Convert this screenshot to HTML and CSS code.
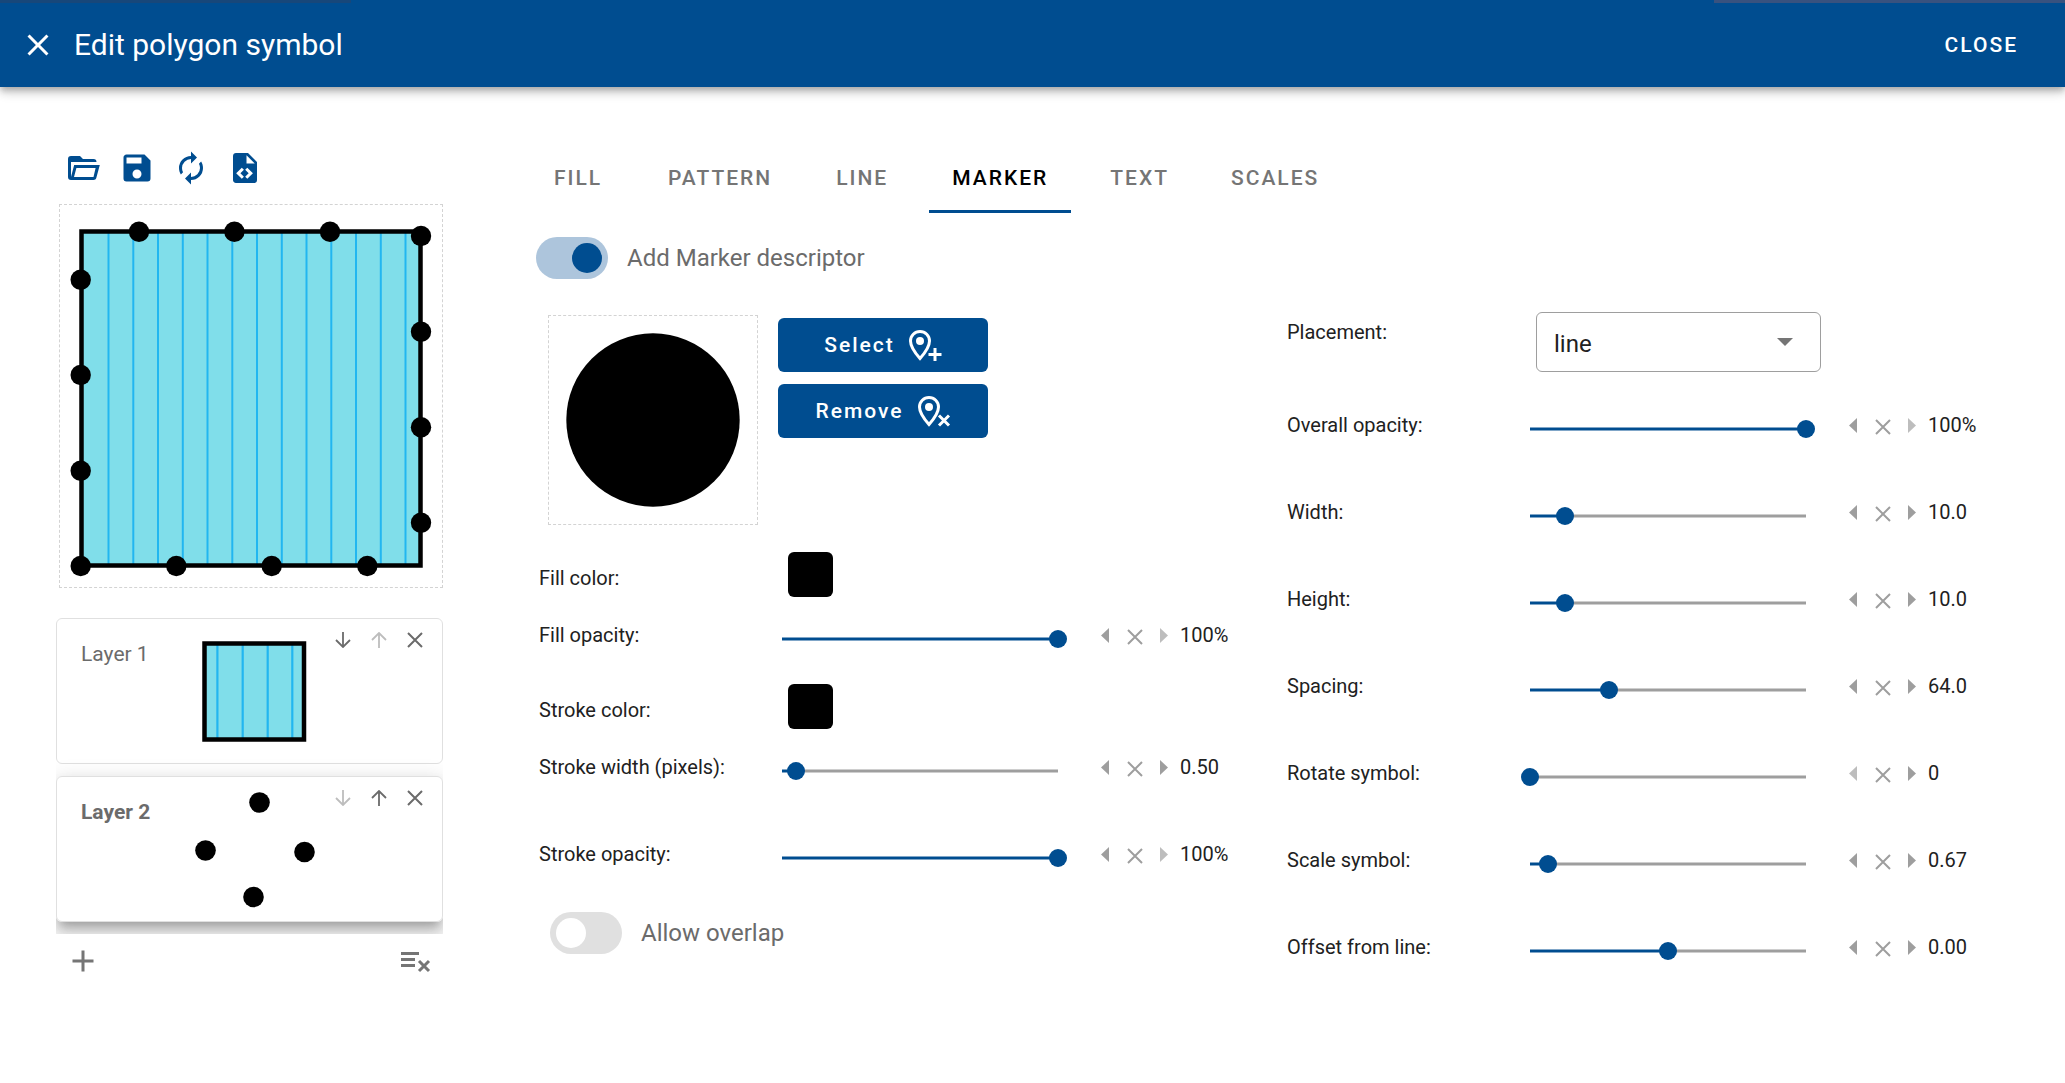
FILE: index.html
```html
<!DOCTYPE html>
<html lang="en">
<head>
    <meta charset="UTF-8">
    <meta name="viewport" content="width=device-width, initial-scale=1.0">
    <title>Edit polygon symbol</title>
    <link rel="stylesheet" href="styles.css">
</head>
<body>

<!-- Shared icons -->
<svg class="sprite" aria-hidden="true">
    <symbol id="i-close" viewBox="0 0 24 24"><path d="M19,6.41L17.59,5L12,10.59L6.41,5L5,6.41L10.59,12L5,17.59L6.41,19L12,13.41L17.59,19L19,17.59L13.41,12L19,6.41Z"/></symbol>
    <symbol id="i-x" viewBox="0 0 16 16"><path d="M1 1L15 15M15 1L1 15" fill="none" stroke="currentColor" stroke-width="2"/></symbol>
    <symbol id="i-down" viewBox="0 0 16 16"><path d="M8 0V14M1 8L8 15L15 8" fill="none" stroke="currentColor" stroke-width="1.8"/></symbol>
    <symbol id="i-up" viewBox="0 0 16 16"><path d="M8 16V2M1 8L8 1L15 8" fill="none" stroke="currentColor" stroke-width="1.8"/></symbol>
    <symbol id="i-prev" viewBox="0 0 8 15"><path d="M8 0V15L0 7.5Z"/></symbol>
    <symbol id="i-next" viewBox="0 0 8 15"><path d="M0 0V15L8 7.5Z"/></symbol>
</svg>

<header class="topbar">
    <button class="icon-btn" aria-label="Close dialog"><svg><use href="#i-close"/></svg></button>
    <h1>Edit polygon symbol</h1>
    <button class="close-btn">CLOSE</button>
</header>

<main class="editor">
    <!-- Preview and layers -->
    <aside class="sidebar">
        <div class="toolbar">
            <button class="icon-btn" aria-label="Open"><svg viewBox="0 0 24 24"><path d="M6.1,10L4,18V8H21A2,2 0 0,0 19,6H12L10,4H4A2,2 0 0,0 2,6V18A2,2 0 0,0 4,20H19C19.9,20 20.7,19.4 20.9,18.5L23.2,10H6.1M19,18H6L7.6,12H20.4L19,18Z"/></svg></button>
            <button class="icon-btn" aria-label="Save"><svg viewBox="0 0 24 24"><path d="M15,9H5V5H15M12,19A3,3 0 0,1 9,16A3,3 0 0,1 12,13A3,3 0 0,1 15,16A3,3 0 0,1 12,19M17,3H5C3.89,3 3,3.9 3,5V19A2,2 0 0,0 5,21H19A2,2 0 0,0 21,19V7L17,3Z"/></svg></button>
            <button class="icon-btn" aria-label="Replace"><svg viewBox="0 0 24 24"><path d="M12,6V9L16,5L12,1V4A8,8 0 0,0 4,12C4,13.57 4.46,15.03 5.24,16.26L6.7,14.8C6.25,13.97 6,13 6,12A6,6 0 0,1 12,6M18.76,7.74L17.3,9.2C17.74,10.04 18,11 18,12A6,6 0 0,1 12,18V15L8,19L12,23V20A8,8 0 0,0 20,12C20,10.43 19.54,8.97 18.76,7.74Z"/></svg></button>
            <button class="icon-btn" aria-label="Show code"><svg viewBox="0 0 24 24"><path d="M13,9H18.5L13,3.5V9M6,2H14L20,8V20A2,2 0 0,1 18,22H6C4.89,22 4,21.1 4,20V4C4,2.89 4.89,2 6,2M6.12,15.5L9.86,19.24L11.28,17.83L8.95,15.5L11.28,13.17L9.86,11.76L6.12,15.5M17.28,15.5L13.54,11.76L12.12,13.17L14.45,15.5L12.12,17.83L13.54,19.24L17.28,15.5Z"/></svg></button>
        </div>

        <div class="preview">
            <svg viewBox="0 0 384 384">
                <rect x="22.5" y="27.5" width="339" height="334" fill="#80deea"/>
                <path d="M49.5 28V361M74.3 28V361M99 28V361M123.8 28V361M148.5 28V361M173.3 28V361M198 28V361M222.8 28V361M247.5 28V361M272.3 28V361M297 28V361M321.8 28V361M346.5 28V361" stroke="#22b6f0" stroke-width="2"/>
                <rect x="22.5" y="27.5" width="339" height="334" fill="none" stroke="#000" stroke-width="4.5"/>
                <g fill="#000">
                    <circle cx="80" cy="27.7" r="10.2"/><circle cx="175.4" cy="27.7" r="10.2"/><circle cx="271" cy="27.7" r="10.2"/>
                    <circle cx="362" cy="32" r="10.2"/><circle cx="362" cy="127.7" r="10.2"/><circle cx="362" cy="223.3" r="10.2"/><circle cx="362" cy="318.7" r="10.2"/>
                    <circle cx="308.3" cy="362" r="10.2"/><circle cx="212.7" cy="362" r="10.2"/><circle cx="117.3" cy="362" r="10.2"/>
                    <circle cx="21.7" cy="362" r="10.2"/><circle cx="21.7" cy="266.7" r="10.2"/><circle cx="21.7" cy="171" r="10.2"/><circle cx="21.7" cy="75.7" r="10.2"/>
                </g>
            </svg>
        </div>

        <div class="layers">
            <div class="layer">
                <span class="layer-name">Layer 1</span>
                <svg class="thumb" viewBox="0 0 120 120">
                    <rect x="9.5" y="12.5" width="99.5" height="96" fill="#80deea"/>
                    <path d="M22.4 12V108M47.7 12V108M72.7 12V108M97.3 12V108" stroke="#22b6f0" stroke-width="2.2"/>
                    <rect x="9.5" y="12.5" width="99.5" height="96" fill="none" stroke="#000" stroke-width="4.5"/>
                </svg>
                <div class="layer-actions">
                    <button aria-label="Move down"><svg><use href="#i-down"/></svg></button>
                    <button aria-label="Move up" disabled><svg><use href="#i-up"/></svg></button>
                    <button aria-label="Remove layer"><svg><use href="#i-x"/></svg></button>
                </div>
            </div>
            <div class="layer active">
                <span class="layer-name">Layer 2</span>
                <svg class="thumb" viewBox="0 0 120 120">
                    <circle cx="64.5" cy="13.5" r="10.3"/><circle cx="10.5" cy="61.5" r="10.3"/><circle cx="109.5" cy="63" r="10.3"/><circle cx="58.5" cy="108" r="10.3"/>
                </svg>
                <div class="layer-actions">
                    <button aria-label="Move down" disabled><svg><use href="#i-down"/></svg></button>
                    <button aria-label="Move up"><svg><use href="#i-up"/></svg></button>
                    <button aria-label="Remove layer"><svg><use href="#i-x"/></svg></button>
                </div>
            </div>
        </div>

        <div class="layers-footer">
            <button class="icon-btn" aria-label="Add layer"><svg viewBox="0 0 36 36"><path d="M18 7.5V28.5M7.5 18H28.5" stroke="currentColor" stroke-width="3"/></svg></button>
            <button class="icon-btn" aria-label="Remove all layers"><svg viewBox="0 0 36 36"><path d="M4 10.5H22M4 16.5H18M4 22.5H18M22 18L32 28M32 18L22 28" stroke="currentColor" stroke-width="3"/></svg></button>
        </div>
    </aside>

    <!-- Symbol descriptor -->
    <section class="content">
        <nav class="tabs">
            <button class="tab">FILL</button>
            <button class="tab">PATTERN</button>
            <button class="tab">LINE</button>
            <button class="tab active">MARKER</button>
            <button class="tab">TEXT</button>
            <button class="tab">SCALES</button>
        </nav>

        <label class="switch add-marker">
            <input type="checkbox" checked>
            Add Marker descriptor
        </label>

        <div class="columns">
            <div class="column">
                <div class="marker">
                    <div class="marker-preview"><svg viewBox="0 0 208 208"><circle cx="104" cy="104" r="86.7"/></svg></div>
                    <div class="marker-buttons">
                        <button class="btn">Select
                            <svg viewBox="0 0 33 31"><path d="M11 1.5A9.5 9.5 0 0 0 1.5 11C1.5 17 7 24 11 28.5C15 24 20.5 17 20.5 11A9.5 9.5 0 0 0 11 1.5Z" fill="none" stroke="currentColor" stroke-width="3"/><circle cx="11" cy="11" r="4"/><path d="M26 18V31M19.5 24.5H32.5" stroke="currentColor" stroke-width="3"/></svg>
                        </button>
                        <button class="btn">Remove
                            <svg viewBox="0 0 33 31"><path d="M11 1.5A9.5 9.5 0 0 0 1.5 11C1.5 17 7 24 11 28.5C15 24 20.5 17 20.5 11A9.5 9.5 0 0 0 11 1.5Z" fill="none" stroke="currentColor" stroke-width="3"/><circle cx="11" cy="11" r="4"/><path d="M21 19.5L31 29.5M31 19.5L21 29.5" stroke="currentColor" stroke-width="3"/></svg>
                        </button>
                    </div>
                </div>

                <div class="row color-row">
                    <label for="fillColor">Fill color:</label>
                    <input type="color" id="fillColor" value="#000000">
                </div>
                <div class="row slider-row">
                    <label for="fillOpacity">Fill opacity:</label>
                    <div class="slider" style="--fill: 100%"><input type="range" id="fillOpacity" min="0" max="1" step="any" value="1"></div>
                    <div class="stepper">
                        <button aria-label="Decrease"><svg class="arrow"><use href="#i-prev"/></svg></button>
                        <button aria-label="Clear"><svg class="clear"><use href="#i-x"/></svg></button>
                        <button aria-label="Increase" disabled><svg class="arrow"><use href="#i-next"/></svg></button>
                    </div>
                    <output>100%</output>
                </div>
                <div class="row color-row">
                    <label for="strokeColor">Stroke color:</label>
                    <input type="color" id="strokeColor" value="#000000">
                </div>
                <div class="row slider-row">
                    <label for="strokeWidth">Stroke width (pixels):</label>
                    <div class="slider" style="--fill: 5%"><input type="range" id="strokeWidth" min="0" max="10" step="any" value="0.5"></div>
                    <div class="stepper">
                        <button aria-label="Decrease"><svg class="arrow"><use href="#i-prev"/></svg></button>
                        <button aria-label="Clear"><svg class="clear"><use href="#i-x"/></svg></button>
                        <button aria-label="Increase"><svg class="arrow"><use href="#i-next"/></svg></button>
                    </div>
                    <output>0.50</output>
                </div>
                <div class="row slider-row">
                    <label for="strokeOpacity">Stroke opacity:</label>
                    <div class="slider" style="--fill: 100%"><input type="range" id="strokeOpacity" min="0" max="1" step="any" value="1"></div>
                    <div class="stepper">
                        <button aria-label="Decrease"><svg class="arrow"><use href="#i-prev"/></svg></button>
                        <button aria-label="Clear"><svg class="clear"><use href="#i-x"/></svg></button>
                        <button aria-label="Increase" disabled><svg class="arrow"><use href="#i-next"/></svg></button>
                    </div>
                    <output>100%</output>
                </div>

                <label class="switch overlap">
                    <input type="checkbox">
                    Allow overlap
                </label>
            </div>

            <div class="column">
                <div class="row select-row">
                    <label for="placement">Placement:</label>
                    <div class="select">
                        <select id="placement">
                            <option>point</option>
                            <option selected>line</option>
                        </select>
                    </div>
                </div>
                <div class="row slider-row">
                    <label for="overallOpacity">Overall opacity:</label>
                    <div class="slider" style="--fill: 100%"><input type="range" id="overallOpacity" min="0" max="1" step="any" value="1"></div>
                    <div class="stepper">
                        <button aria-label="Decrease"><svg class="arrow"><use href="#i-prev"/></svg></button>
                        <button aria-label="Clear"><svg class="clear"><use href="#i-x"/></svg></button>
                        <button aria-label="Increase" disabled><svg class="arrow"><use href="#i-next"/></svg></button>
                    </div>
                    <output>100%</output>
                </div>
                <div class="row slider-row">
                    <label for="width">Width:</label>
                    <div class="slider" style="--fill: 12.7%"><input type="range" id="width" min="1" max="72" step="any" value="10"></div>
                    <div class="stepper">
                        <button aria-label="Decrease"><svg class="arrow"><use href="#i-prev"/></svg></button>
                        <button aria-label="Clear"><svg class="clear"><use href="#i-x"/></svg></button>
                        <button aria-label="Increase"><svg class="arrow"><use href="#i-next"/></svg></button>
                    </div>
                    <output>10.0</output>
                </div>
                <div class="row slider-row">
                    <label for="height">Height:</label>
                    <div class="slider" style="--fill: 12.7%"><input type="range" id="height" min="1" max="72" step="any" value="10"></div>
                    <div class="stepper">
                        <button aria-label="Decrease"><svg class="arrow"><use href="#i-prev"/></svg></button>
                        <button aria-label="Clear"><svg class="clear"><use href="#i-x"/></svg></button>
                        <button aria-label="Increase"><svg class="arrow"><use href="#i-next"/></svg></button>
                    </div>
                    <output>10.0</output>
                </div>
                <div class="row slider-row">
                    <label for="spacing">Spacing:</label>
                    <div class="slider" style="--fill: 28.8%"><input type="range" id="spacing" min="1" max="220" step="any" value="64"></div>
                    <div class="stepper">
                        <button aria-label="Decrease"><svg class="arrow"><use href="#i-prev"/></svg></button>
                        <button aria-label="Clear"><svg class="clear"><use href="#i-x"/></svg></button>
                        <button aria-label="Increase"><svg class="arrow"><use href="#i-next"/></svg></button>
                    </div>
                    <output>64.0</output>
                </div>
                <div class="row slider-row">
                    <label for="rotate">Rotate symbol:</label>
                    <div class="slider" style="--fill: 0%"><input type="range" id="rotate" min="0" max="360" step="any" value="0"></div>
                    <div class="stepper">
                        <button aria-label="Decrease" disabled><svg class="arrow"><use href="#i-prev"/></svg></button>
                        <button aria-label="Clear"><svg class="clear"><use href="#i-x"/></svg></button>
                        <button aria-label="Increase"><svg class="arrow"><use href="#i-next"/></svg></button>
                    </div>
                    <output>0</output>
                </div>
                <div class="row slider-row">
                    <label for="scale">Scale symbol:</label>
                    <div class="slider" style="--fill: 6.4%"><input type="range" id="scale" min="0.1" max="9" step="any" value="0.67"></div>
                    <div class="stepper">
                        <button aria-label="Decrease"><svg class="arrow"><use href="#i-prev"/></svg></button>
                        <button aria-label="Clear"><svg class="clear"><use href="#i-x"/></svg></button>
                        <button aria-label="Increase"><svg class="arrow"><use href="#i-next"/></svg></button>
                    </div>
                    <output>0.67</output>
                </div>
                <div class="row slider-row">
                    <label for="offset">Offset from line:</label>
                    <div class="slider" style="--fill: 50%"><input type="range" id="offset" min="-10" max="10" step="any" value="0"></div>
                    <div class="stepper">
                        <button aria-label="Decrease"><svg class="arrow"><use href="#i-prev"/></svg></button>
                        <button aria-label="Clear"><svg class="clear"><use href="#i-x"/></svg></button>
                        <button aria-label="Increase"><svg class="arrow"><use href="#i-next"/></svg></button>
                    </div>
                    <output>0.00</output>
                </div>
            </div>
        </div>
    </section>
</main>

</body>
</html>
```
FILE: styles.css
```css
* {
    box-sizing: border-box;
}

body {
    margin: 0;
    background-color: #fff;
    color: #212121;
    font-family: Roboto, sans-serif;
    font-size: 20px;
    line-height: 30px;
}

button {
    padding: 0;
    border: none;
    background: none;
    color: inherit;
    font: inherit;
    cursor: pointer;
}

svg {
    display: block;
    fill: currentColor;
}

.sprite {
    display: none;
}

/* Header */
.topbar {
    position: relative;
    display: flex;
    align-items: center;
    height: 87px;
    padding: 3px 23px 0 20px;
    background-color: #004d90;
    color: #fff;
    box-shadow: 0 3px 6px -1px rgba(0, 0, 0, 0.2), 0 6px 8px rgba(0, 0, 0, 0.14), 0 2px 15px rgba(0, 0, 0, 0.12);
}

.topbar::before,
.topbar::after {
    content: "";
    position: absolute;
    top: 0;
    height: 3px;
    width: 17%;
}

.topbar::before {
    left: 0;
    background-color: #17477a;
}

.topbar::after {
    right: 0;
    background-color: #38527f;
}

.topbar h1 {
    flex: 1;
    margin: 0 0 0 18px;
    font-size: 30px;
    font-weight: 400;
}

.icon-btn svg {
    width: 36px;
    height: 36px;
}

.close-btn {
    padding: 12px 24px;
    font-size: 21px;
    font-weight: 500;
    letter-spacing: 2px;
}

.editor {
    display: grid;
    grid-template-columns: 387px 1fr;
    gap: 86px;
    padding: 54px 30px 54px 56px;
}

/* Sidebar */
.sidebar {
    padding-top: 9px;
}

.toolbar {
    display: flex;
    gap: 18px;
    padding-left: 9px;
    color: #004d90;
}

.preview {
    margin: 18px 0 30px 3px;
}

.preview,
.marker-preview {
    outline: 1px dashed #d3d3d3;
    outline-offset: -1px;
}

.layers {
    display: flex;
    flex-direction: column;
    gap: 12px;
    padding-bottom: 12px;
    overflow: hidden;
}

.layer {
    display: grid;
    grid-template-columns: 114px 120px 1fr;
    align-items: start;
    height: 146px;
    padding-left: 24px;
    border: 1px solid #e0e0e0;
    border-radius: 6px;
    color: #6b6b6b;
}

.layer.active {
    box-shadow: 0 8px 8px -5px rgba(0, 0, 0, 0.2), 0 12px 15px 2px rgba(0, 0, 0, 0.14), 0 5px 21px 3px rgba(0, 0, 0, 0.12);
}

.layer-name {
    padding-top: 20px;
    font-size: 21px;
}

.active .layer-name {
    font-weight: 700;
}

.thumb {
    width: 120px;
    height: 120px;
    margin-top: 12px;
    color: #000;
}

.layer-actions {
    display: flex;
    justify-content: flex-end;
    padding: 3px 9px 0 0;
}

.layer-actions button {
    display: grid;
    place-items: center;
    width: 36px;
    height: 36px;
}

.layer-actions svg {
    width: 16px;
    height: 16px;
}

.layer-actions button:disabled {
    color: #bdbdbd;
}

.layers-footer {
    display: flex;
    justify-content: space-between;
    padding: 9px 10px 0 9px;
    color: #757575;
}

/* Tabs */
.tabs {
    display: flex;
    gap: 16px;
    margin-left: -2px;
}

.tab {
    min-width: 102px;
    height: 72px;
    padding: 5px 23px 0;
    border-bottom: 3px solid transparent;
    color: #757575;
    font-size: 21px;
    font-weight: 500;
    letter-spacing: 2px;
}

.tab.active {
    border-color: #004d90;
    color: #000;
}

/* Switches */
.switch {
    display: flex;
    align-items: center;
    gap: 19px;
    color: #6b6b6b;
    font-size: 24px;
}

.switch input {
    appearance: none;
    display: flex;
    width: 72px;
    height: 42px;
    margin: 0;
    padding: 6px;
    border-radius: 21px;
    background-color: #e0e0e0;
}

.switch input::before {
    content: "";
    width: 30px;
    height: 30px;
    border-radius: 50%;
    background-color: #fff;
}

.switch input:checked {
    justify-content: flex-end;
    background-color: #adc5dc;
}

.switch input:checked::before {
    background-color: #004d90;
}

.add-marker {
    margin: 24px 0 33px 7px;
}

.overlap {
    margin: 9px 0 0 11px;
}

/* Marker settings */
.columns {
    display: grid;
    grid-template-columns: 1fr 1fr;
    padding-left: 10px;
}

.marker {
    display: flex;
    gap: 20px;
    margin: 3px 0 27px 9px;
}

.marker-preview {
    width: 210px;
    height: 210px;
    padding: 1px;
    color: #000;
}

.marker-buttons {
    display: flex;
    flex-direction: column;
    gap: 12px;
    padding-top: 3px;
}

.btn {
    display: flex;
    align-items: center;
    justify-content: center;
    gap: 14px;
    width: 210px;
    height: 54px;
    border-radius: 6px;
    background-color: #004d90;
    color: #fff;
    font-size: 21px;
    font-weight: 500;
    letter-spacing: 2px;
}

.btn svg {
    width: 33px;
    height: 31px;
}

.row {
    display: grid;
    grid-template-columns: 243px 1fr 67px 119px;
    align-items: start;
}

.color-row label {
    padding-top: 11px;
}

.color-row input {
    appearance: none;
    width: 45px;
    height: 45px;
    margin-left: 6px;
    padding: 0;
    border: none;
    border-radius: 6px;
    background: none;
    overflow: hidden;
}

.color-row input::-webkit-color-swatch-wrapper {
    padding: 0;
}

.color-row input::-webkit-color-swatch {
    border: none;
}

.slider-row {
    padding: 23px 0 34px;
}

.slider {
    height: 18px;
    margin: 10px 43px 0 0;
    background:
        linear-gradient(#80a6c8 1px, #004d90 1px 3px, #80a6c8 3px) left center / var(--fill) 4px no-repeat,
        linear-gradient(#cecece 1px, #9e9e9e 1px 3px, #cecece 3px) left center / 100% 4px no-repeat;
}

.slider input {
    appearance: none;
    display: block;
    width: calc(100% + 18px);
    height: 18px;
    margin: 0 -9px;
    background: none;
}

.slider input::-webkit-slider-thumb {
    appearance: none;
    width: 18px;
    height: 18px;
    border-radius: 50%;
    background-color: #004d90;
}

.slider input::-moz-range-thumb {
    width: 18px;
    height: 18px;
    border: none;
    border-radius: 50%;
    background-color: #004d90;
}

.stepper {
    display: flex;
    align-items: center;
    justify-content: space-between;
    height: 30px;
    color: #9e9e9e;
}

.stepper button:disabled {
    color: #bdbdbd;
}

.arrow {
    width: 8px;
    height: 15px;
}

.clear {
    width: 16px;
    height: 16px;
    margin-top: 3px;
}

.row output {
    padding-left: 12px;
}

/* Placement drop-down */
.select-row {
    height: 75px;
}

.select-row label {
    padding-top: 5px;
}

.select {
    position: relative;
    margin: 0 28px 0 6px;
}

.select::after {
    content: "";
    position: absolute;
    top: 26px;
    right: 28px;
    border: 8px solid transparent;
    border-top-color: #757575;
    border-bottom: none;
    pointer-events: none;
}

.select select {
    appearance: none;
    width: 100%;
    height: 60px;
    padding: 3px 17px 0;
    border: 1px solid #9e9e9e;
    border-radius: 6px;
    background: none;
    color: #212121;
    font: inherit;
    font-size: 24px;
}
```
